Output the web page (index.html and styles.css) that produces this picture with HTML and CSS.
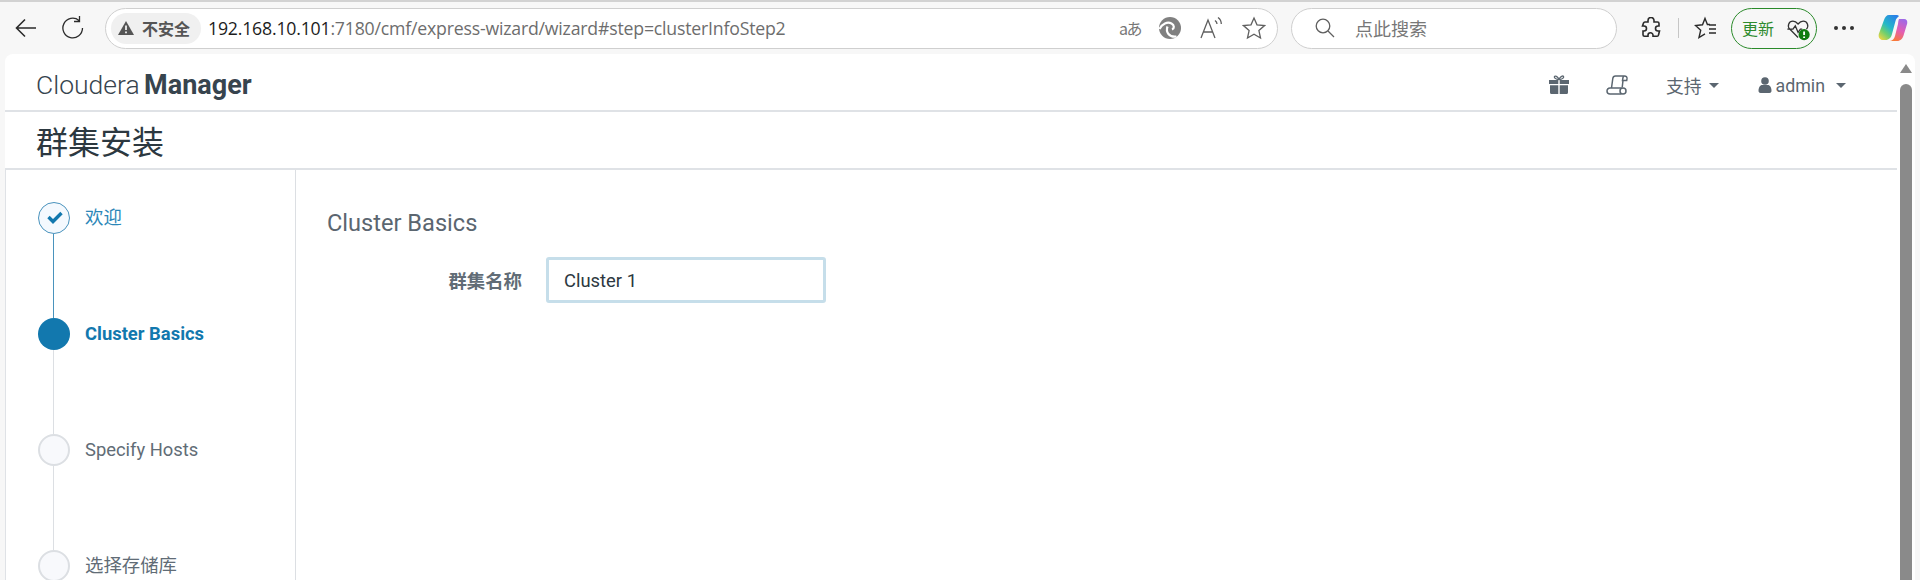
FILE: index.html
```html
<!DOCTYPE html>
<html lang="zh">
<head>
    <meta charset="UTF-8">
    <title>群集安装</title>
    <link rel="stylesheet" href="styles.css">
</head>
<body>
    <div class="toolbar">
        <svg class="tool-icon back" width="26" height="26" viewBox="0 0 26 26"><path d="M23 13H4M12 4.500 3.500 13l8.500 8.500" /></svg>
        <svg class="tool-icon reload" width="26" height="26" viewBox="0 0 26 26"><path d="M19 5.500A9.800 9.800 0 1 0 22.500 13M19.500 1v5.500H14" /></svg>

        <div class="address">
            <div class="not-secure">
                <svg width="16" height="14" viewBox="0 0 16 14"><path class="warn" d="M8 0 16 14H0Z" /><path class="warn-mark" d="M8 4.500v4.500M8 10.500v1.700" /></svg>
                <span>不安全</span>
            </div>
            <div class="url"><b>192.168.10.101</b>:7180/cmf/express-wizard/wizard#step=clusterInfoStep2</div>
            <div class="address-icons">
                <span class="translate">aあ</span>
                <svg width="24" height="24" viewBox="0 0 24 24">
                    <circle class="grey-fill" cx="12" cy="12" r="11" />
                    <path class="edge-swirl" d="M1.500 13C4 7.500 9.500 5.500 13.500 7.500c3 1.500 3 5 .5 6" />
                    <path class="edge-swirl" d="M9.500 10.500c-2 5.500 1.500 11 9 10" />
                </svg>
                <svg class="tool-icon thin" width="26" height="24" viewBox="0 0 26 24"><path d="M2 22 9 4l7 18M4.500 16h9M16 4.500c1.300 1 2 2.200 2 3.500M19 1.500c2.300 1.600 3.300 4 3.300 6.500" /></svg>
                <svg class="tool-icon thin" width="24" height="24" viewBox="0 0 24 24"><path d="M12 2l3 6.800 7.500.8-5.600 5 1.600 7.400L12 18.200 5.500 22l1.600-7.400-5.600-5L9 8.800Z" /></svg>
            </div>
        </div>

        <div class="search">
            <svg class="tool-icon thin" width="22" height="22" viewBox="0 0 22 22"><circle cx="9" cy="9" r="6.800" /><path d="M14 14l6 6" /></svg>
            <span>点此搜索</span>
        </div>

        <svg class="tool-icon puzzle" width="22" height="22" viewBox="0 0 22 22"><path d="M8 3.500a3 3 0 0 1 6 0V5h3.500a1.500 1.500 0 0 1 1.500 1.500V9h-1a2.500 2.500 0 0 0 0 5h1.500l-1 4a1.500 1.500 0 0 1-1.500 1.300H13v-1a2.500 2.500 0 0 0-5 0v1H4.500A1.500 1.500 0 0 1 3 17.800V14h1a2.500 2.500 0 0 0 0-5H2.500l1-3A1.500 1.500 0 0 1 5 5h3Z" /></svg>
        <span class="divider"></span>
        <svg class="tool-icon favs" width="24" height="24" viewBox="0 0 24 24"><path d="M16 8.500h-2.600L11 2.500 8.500 8.800 1.500 9.500l5.200 4.700-1.700 7.300 6-3.700M15 13h7M15 9h7M15 17h7" /></svg>

        <div class="update">
            <span>更新</span>
            <svg width="26" height="26" viewBox="0 0 28 28">
                <path class="heart" d="M13 22 4 13C1 9.500 3 4.500 7.500 4.500c2.500 0 4 1.200 5.500 3 1.500-1.800 3-3 5.500-3 4.500 0 6.500 5 3.500 8.500M1.500 13h6l2.500-3.500 3 7 2.500-3.500h2" />
                <circle class="badge" cx="19.500" cy="19" r="6" />
                <path class="badge-mark" d="M19.500 15.500v4M19.500 21v1.500" />
            </svg>
        </div>

        <div class="dots"><i></i><i></i><i></i></div>

        <svg class="copilot" width="30" height="28" viewBox="0 0 30 28">
            <defs>
                <linearGradient id="cpA" x1="0.800" y1="0" x2="0.100" y2="1"><stop offset="0" stop-color="#2a80e8" /><stop offset="0.45" stop-color="#25b8c8" /><stop offset="0.7" stop-color="#6ccf70" /><stop offset="1" stop-color="#f3d53e" /></linearGradient>
                <linearGradient id="cpB" x1="0.700" y1="0" x2="0.300" y2="1"><stop offset="0" stop-color="#9f6ae6" /><stop offset="0.5" stop-color="#e35eb4" /><stop offset="1" stop-color="#f97a35" /></linearGradient>
            </defs>
            <path fill="url(#cpB)" d="M21 5h5c2.500 0 3.800 2 3.200 4.500L26 20c-1 4.500-3.500 7-7 7h-7c2.500-.5 4.200-2 5-5l3-12c.3-2 .3-3.500 1-5Z" />
            <path fill="url(#cpA)" d="M11 1h8c1.500 0 2 1 1.500 1.800-1.500.8-2.500 2.200-3 4.200L14 20c-.8 3.500-3 6-6.500 6H5C2 26 0 23.500.8 20L6 6C7 3 8.500 1 11 1Z" />
        </svg>
    </div>

    <div class="page">
        <div class="content">
            <header class="topbar">
                <div class="brand">Cloudera <b>Manager</b></div>
                <nav class="topnav">
                    <svg class="gift" width="20" height="20" viewBox="0 0 20 20">
                        <path d="M0 5h9.300v4H0ZM10.700 5H20v4h-9.300ZM1 10.300h8.300V19H2.500A1.500 1.500 0 0 1 1 17.500ZM10.700 10.300H19v7.200a1.500 1.500 0 0 1-1.500 1.500h-6.800Z" />
                        <path class="gift-bow" d="M10 4.500C8.500 1 6 .5 5.500 1.500S6.500 4.500 10 4.500C11.500 1 14 .5 14.500 1.500s-1 3-4.500 3Z" />
                    </svg>
                    <svg class="scroll-icon" width="22" height="20" viewBox="0 0 22 20"><path d="M18.500 1H9.500C8 1 7 2 6.800 3.500L5.500 13M18.500 1c1.800 0 2.700 1.300 2.500 2.700l-.3 1.800h-4.200l.5-3c.2-.9.700-1.500 1.500-1.500ZM17 5.500l-.8 7M4 13h11.500M4 13c-1.800 0-3 1.300-3 3s1.200 3 3 3h11.500" /><circle cx="17" cy="16" r="3" /></svg>
                    <a class="nav-link support">支持<span class="caret"></span></a>
                    <a class="nav-link user">
                        <svg width="14" height="16" viewBox="0 0 13 16"><circle cx="6.500" cy="4" r="3.800" /><path d="M0 14c0-4 2-6 3.500-6h6C11 8 13 10 13 14c0 1.200-1 2-2 2H2c-1 0-2-.8-2-2Z" /></svg>
                        admin<span class="caret"></span>
                    </a>
                </nav>
            </header>

            <h1 class="page-title">群集安装</h1>

            <div class="wizard">
                <aside class="steps">
                    <div class="step done">
                        <div class="marker">
                            <span class="dot"><svg width="18" height="14" viewBox="0 0 18 14"><path d="M2.500 7 7 11.500 15.500 3" /></svg></span>
                            <span class="line"></span>
                        </div>
                        <span class="step-label">欢迎</span>
                    </div>
                    <div class="step current">
                        <div class="marker">
                            <span class="dot"></span>
                            <span class="line"></span>
                        </div>
                        <span class="step-label">Cluster Basics</span>
                    </div>
                    <div class="step">
                        <div class="marker">
                            <span class="dot"></span>
                            <span class="line"></span>
                        </div>
                        <span class="step-label">Specify Hosts</span>
                    </div>
                    <div class="step">
                        <div class="marker">
                            <span class="dot"></span>
                        </div>
                        <span class="step-label">选择存储库</span>
                    </div>
                </aside>

                <main class="form-area">
                    <h2 class="section-title">Cluster Basics</h2>
                    <div class="form-row">
                        <label class="form-label" for="clusterName">群集名称</label>
                        <input class="form-input" id="clusterName" type="text" value="Cluster 1">
                    </div>
                </main>
            </div>
        </div>

        <div class="scrollbar">
            <span class="scroll-up"></span>
            <span class="scroll-thumb"></span>
        </div>
    </div>
</body>
</html>
```

FILE: styles.css
```css
* {
    box-sizing: border-box;
}
html, body {
    height: 580px;
    margin: 0;
    overflow: hidden;
}
body {
    background: #f7f7f7;
    border-top: 2px solid #d2d2d2;
    font-family: Roboto, "Noto Sans CJK SC", sans-serif;
    color: #5b6670;
}
.tool-icon {
    fill: none;
    stroke: #2b2b2b;
    stroke-width: 1.6;
    flex: none;
}
.tool-icon.thin {
    stroke: #5f5f5f;
    stroke-width: 1.3;
}

/* browser bar */
.toolbar {
    height: 52px;
    display: flex;
    align-items: center;
    padding-left: 13px;
}
.reload {
    margin-left: 21px;
    stroke-width: 1.3;
}
.address {
    width: 1173px;
    height: 41px;
    margin-left: 19px;
    background: #fff;
    border: 1px solid #cfcfcf;
    border-radius: 21px;
    display: flex;
    align-items: center;
    padding-left: 5px;
}
.not-secure {
    display: flex;
    align-items: center;
    gap: 8px;
    height: 31px;
    padding: 0 11px 0 7px;
    background: #f0f0f0;
    border-radius: 16px;
    font-size: 16px;
    font-weight: 700;
    color: #555;
}
.warn {
    fill: #555;
}
.warn-mark {
    stroke: #f0f0f0;
    stroke-width: 1.8;
}
.url {
    margin-left: 7px;
    font-family: "Open Sans", sans-serif;
    font-size: 17.7px;
    color: #6d6d6d;
    letter-spacing: -0.2px;
}
.url b {
    font-weight: 400;
    color: #1c1c1c;
}
.address-icons {
    margin-left: auto;
    padding-right: 11px;
    display: flex;
    align-items: center;
    gap: 17px;
}
.translate {
    font-size: 16px;
    color: #777;
    font-family: "Noto Sans CJK JP", sans-serif;
    letter-spacing: -1.5px;
}
.grey-fill {
    fill: #808080;
}
.edge-swirl {
    fill: none;
    stroke: #fff;
    stroke-width: 2.2;
}
.search {
    width: 326px;
    height: 41px;
    margin-left: 13px;
    background: #fff;
    border: 1px solid #cfcfcf;
    border-radius: 21px;
    display: flex;
    align-items: center;
    gap: 19px;
    padding-left: 22px;
    font-size: 18px;
    color: #777;
}
.puzzle {
    margin-left: 23px;
}
.divider {
    width: 1px;
    height: 20px;
    margin-left: 16px;
    background: #c6c6c6;
}
.favs {
    margin-left: 15px;
    stroke-width: 1.4;
}
.update {
    width: 86px;
    height: 41px;
    margin-left: 13px;
    border: 1.5px solid #2a8a2a;
    border-radius: 21px;
    display: flex;
    align-items: center;
    padding-left: 10px;
    gap: 12px;
    font-size: 16px;
    color: #2e8b2e;
}
.update svg {
    margin-top: 3px;
}
.heart {
    fill: none;
    stroke: #333;
    stroke-width: 1.4;
}
.badge {
    fill: #107c10;
}
.badge-mark {
    stroke: #fff;
    stroke-width: 2;
}
.dots {
    margin-left: 17px;
    display: flex;
    gap: 4px;
}
.dots i {
    width: 4px;
    height: 4px;
    border-radius: 50%;
    background: #333;
}
.copilot {
    margin-left: 24px;
}

/* page */
.page {
    margin: 0 5px;
    height: 526px;
    background: #fff;
    border-radius: 8px 8px 0 0;
    display: flex;
    overflow: hidden;
}
.content {
    width: 1892px;
}
.topbar {
    height: 58px;
    display: flex;
    align-items: center;
    justify-content: space-between;
    padding: 6px 0 0 31px;
    border-bottom: 2px solid #dfe2e6;
}
.brand {
    font-size: 26.5px;
    font-weight: 300;
    word-spacing: -2px;
    color: #37444e;
}
.brand b {
    font-size: 27px;
    font-weight: 700;
}
.topnav {
    display: flex;
    align-items: center;
    color: #5b6670;
    font-size: 17.8px;
}
.gift {
    fill: #5b6670;
}
.gift-bow {
    fill: none;
    stroke: #5b6670;
    stroke-width: 1.3;
}
.scroll-icon {
    margin-left: 37px;
    fill: none;
    stroke: #5b6670;
    stroke-width: 1.5;
}
.nav-link {
    display: flex;
    align-items: center;
}
.support {
    margin-left: 38px;
}
.user {
    margin-left: 39px;
    margin-right: 51px;
    gap: 4px;
}
.user svg {
    fill: #5b6670;
}
.caret {
    width: 0;
    height: 0;
    margin-left: 7px;
    border-left: 5px solid transparent;
    border-right: 5px solid transparent;
    border-top: 5px solid #5b6670;
}
.page-title {
    height: 58px;
    margin: 0;
    padding: 9px 0 0 31px;
    font-size: 32px;
    font-weight: 400;
    line-height: 44px;
    color: #2c3840;
    border-bottom: 2px solid #dfe2e6;
}
.wizard {
    display: flex;
    height: 410px;
    border-left: 1px solid #dfe2e6;
}
.steps {
    width: 290px;
    padding: 32px 0 0 32px;
    border-right: 1px solid #dcdfe3;
}
.step {
    display: flex;
    align-items: flex-start;
    gap: 15px;
}
.marker {
    display: flex;
    flex-direction: column;
    align-items: center;
    width: 32px;
}
.dot {
    width: 32px;
    height: 32px;
    border-radius: 50%;
    border: 2px solid #dcdfe3;
    background: #f8f9fc;
    display: flex;
    align-items: center;
    justify-content: center;
}
.line {
    width: 1px;
    height: 84px;
    margin-left: -2px;
    background: #dcdfe3;
}
.step-label {
    line-height: 32px;
    font-size: 18.4px;
    color: #616c76;
}
.done .dot {
    border: 1px solid #4a93bd;
    background: #f4f9fe;
}
.done .dot svg {
    fill: none;
    stroke: #1278ae;
    stroke-width: 3.4;
    margin-left: 1px;
    margin-top: -2px;
}
.done .line {
    background: #4a93bd;
}
.done .step-label {
    color: #2c87b8;
}
.current .dot {
    border: none;
    background: #1278ae;
}
.current .step-label {
    color: #1278ae;
    font-weight: 700;
}
.form-area {
    padding: 39px 0 0 31px;
}
.section-title {
    margin: 0;
    font-size: 23.6px;
    font-weight: 400;
    line-height: 28px;
    color: #5b6670;
}
.form-row {
    display: flex;
    align-items: center;
    margin-top: 20px;
}
.form-label {
    width: 195px;
    text-align: right;
    font-size: 18.4px;
    font-weight: 700;
    color: #616c76;
}
.form-input {
    width: 280px;
    height: 46px;
    margin-left: 24px;
    padding: 0 15px;
    border: 3px solid #c6deea;
    border-radius: 3px;
    font-family: inherit;
    font-size: 18.4px;
    color: #2c3840;
}

.scrollbar {
    flex: 1;
    display: flex;
    flex-direction: column;
    align-items: center;
    padding-top: 10px;
}
.scroll-up {
    width: 0;
    height: 0;
    border-left: 6px solid transparent;
    border-right: 6px solid transparent;
    border-bottom: 9px solid #8a8a8a;
}
.scroll-thumb {
    width: 12px;
    flex: 1;
    margin-top: 11px;
    background: #8a8a8a;
    border-radius: 6px 6px 0 0;
}
```
